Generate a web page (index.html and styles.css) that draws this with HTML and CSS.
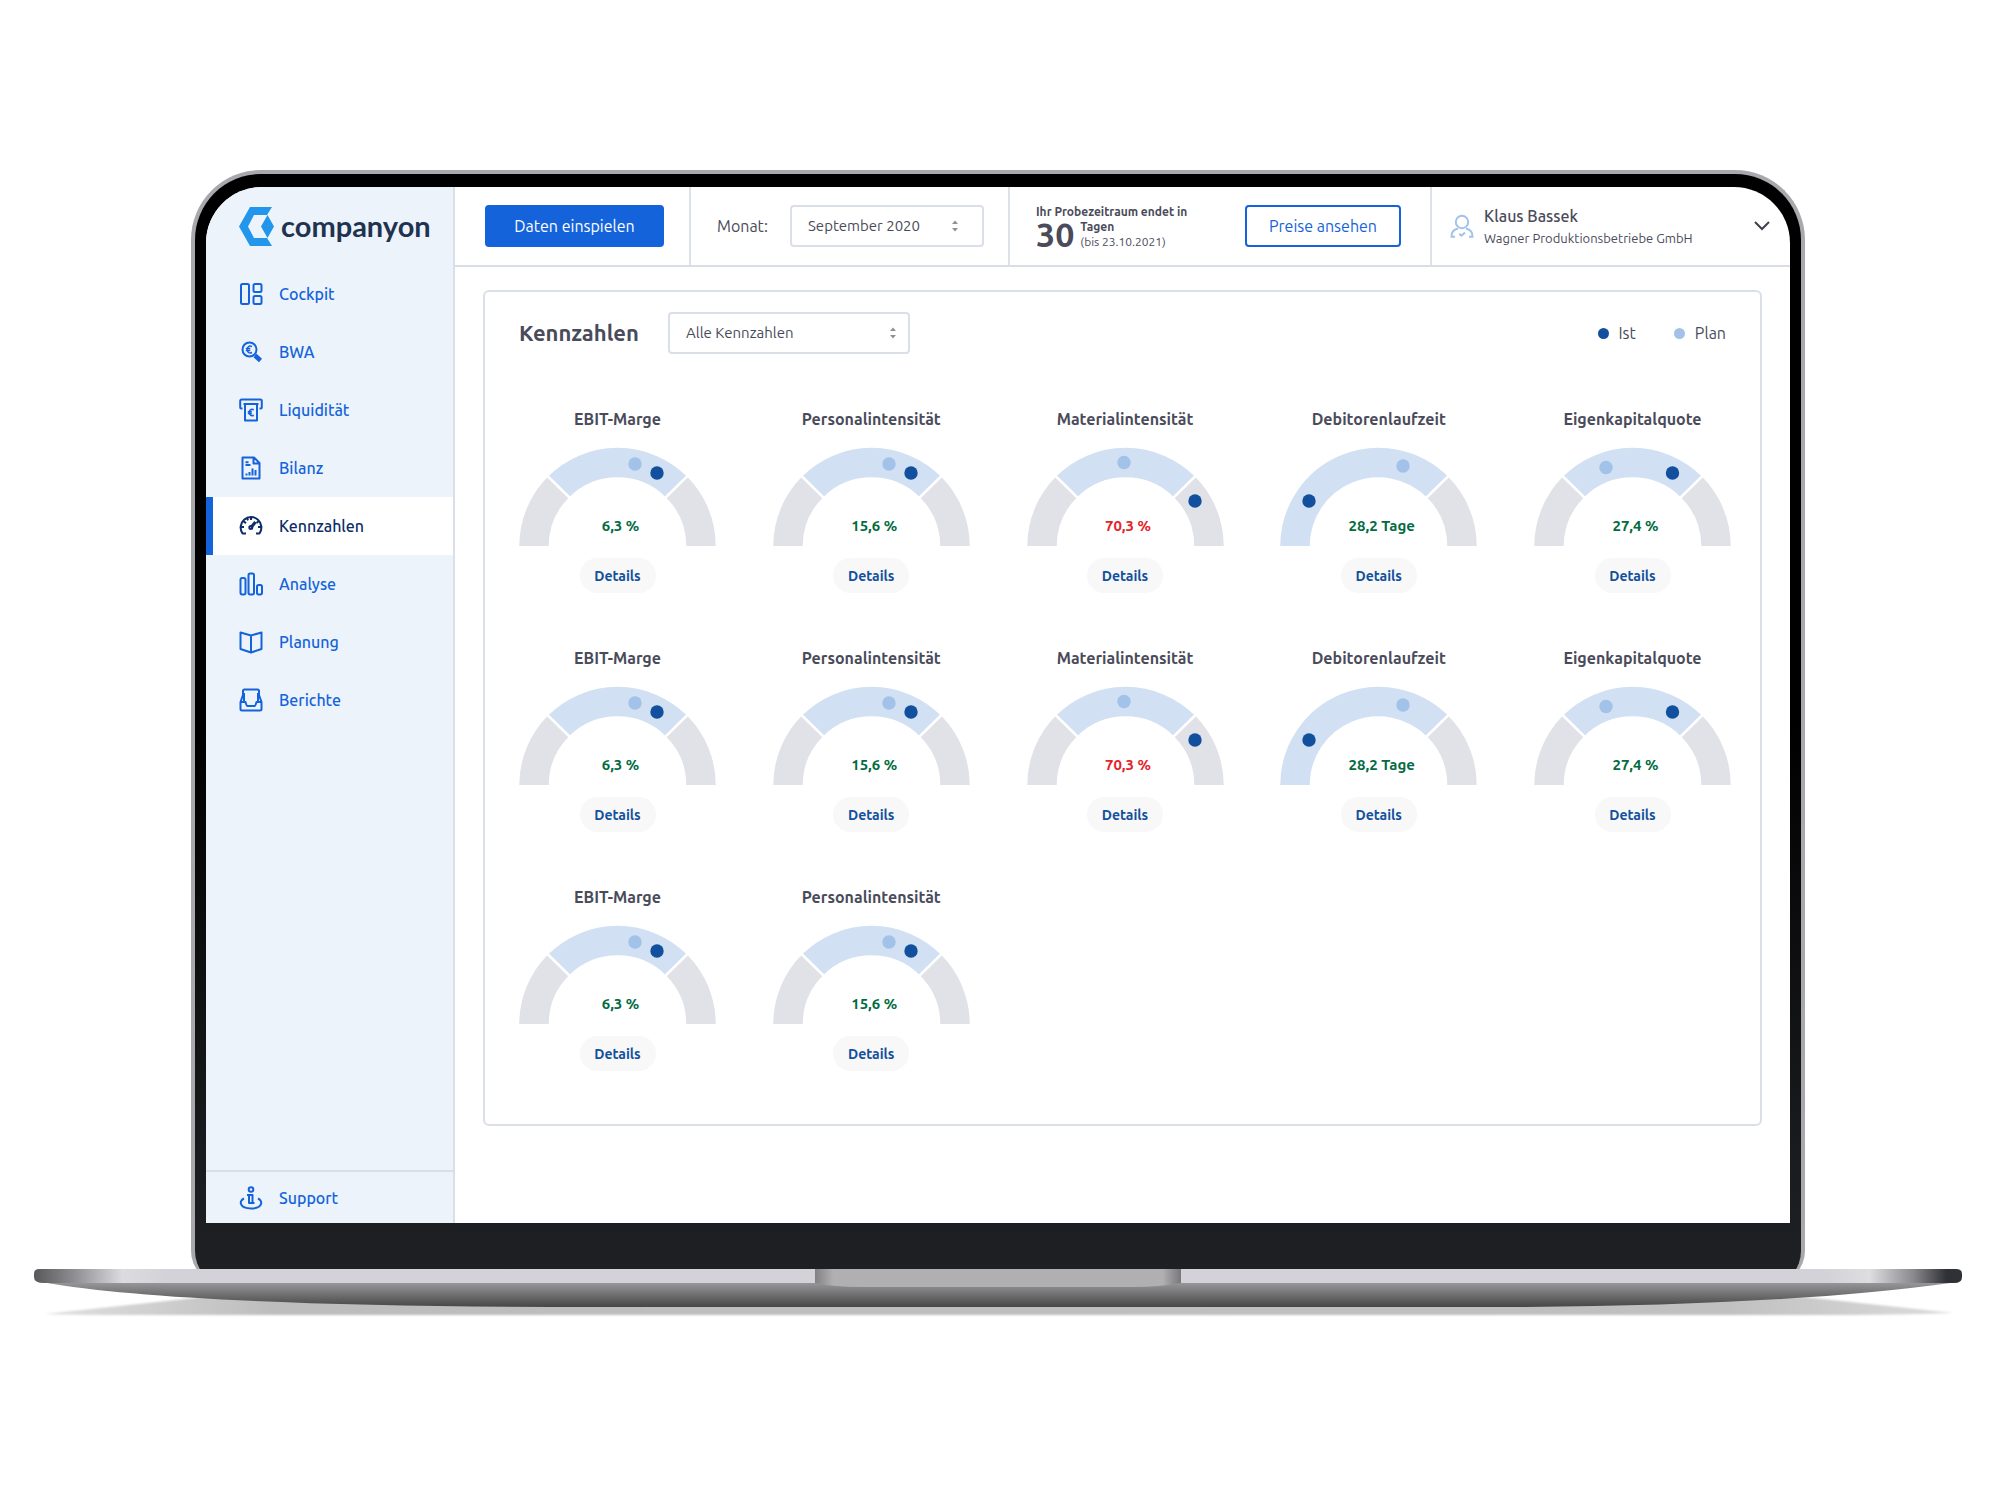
FILE: index.html
```html
<!DOCTYPE html>
<html lang="de">
<head>
<meta charset="utf-8">
<meta name="viewport" content="width=device-width, initial-scale=1">
<title>companyon – Kennzahlen</title>
<link rel="stylesheet" href="styles.css">
</head>
<body>
<svg class="symbols" aria-hidden="true">
  <symbol id="band" viewBox="0 0 197 99">
    <path class="seg-out" d="M15 99A83.5 83.5 0 0 1 39.5 40M157.500 40A83.500 83.500 0 0 1 182 99"/>
    <path class="seg-ok" d="M39.500 40A83.500 83.500 0 0 1 157.500 40"/>
    <path class="seg-gap" d="M27 27.500L52 52M170 27.500L145 52"/>
  </symbol>
  <symbol id="band-low" viewBox="0 0 197 99">
    <path class="seg-out" d="M157.500 40A83.500 83.500 0 0 1 182 99"/>
    <path class="seg-ok" d="M15 99A83.500 83.500 0 0 1 157.500 40"/>
    <path class="seg-gap" d="M170 27.500L145 52"/>
  </symbol>
  <symbol id="sort" viewBox="0 0 8 12"><path d="M4 0.500L7 4H1zM4 11.500L7 8H1z"/></symbol>
</svg>
<div class="laptop">
  <div class="lid">
    <div class="screen">
      <aside class="sidebar">
        <a class="logo" href="#">
          <svg width="36" height="39" viewBox="0 0 36 39" fill="#2196ea" aria-hidden="true"><path d="M0 19.500L11 0H33L28 8H15L9 19.500L15 31H28L33 39H11zM22 19.500L28.500 8L35 19.500L28.500 31z"/></svg>
          <span>companyon</span>
        </a>
        <nav class="nav">
          <a href="#"><svg class="icon" viewBox="0 0 24 24"><rect x="2" y="2" width="8" height="20" rx="1.500"/><rect x="14.500" y="2" width="8" height="8" rx="1.500"/><rect x="14.500" y="14" width="8" height="8" rx="1.500"/></svg>Cockpit</a>
          <a href="#"><svg class="icon" viewBox="0 0 24 24"><circle cx="10.500" cy="9.500" r="7"/><path d="M16 15.500L21.500 20.500" stroke-width="4.500"/><path d="M13 6.500C10 5 8.300 7 8.300 9.500S10 14 13 12.500M6.800 8.500h4.500M6.800 10.500h4.500" stroke-width="1.500"/></svg>BWA</a>
          <a href="#"><svg class="icon" viewBox="0 0 24 24"><path d="M3.500 10.500H2.200Q1.200 10.500 1.200 9.500V3Q1.200 1.500 2.700 1.500H21.300Q22.800 1.500 22.800 3V9.500Q22.800 10.500 21.800 10.500H20.500M4.500 6H19.500M6 6V22.500H18V6"/><path d="M14.800 11.800C11.800 10.500 10.300 12.500 10.300 14.500S12 18.500 14.800 17.200M8.800 13.700h4M8.800 15.500h4" stroke-width="1.500"/></svg>Liquidität</a>
          <a href="#"><svg class="icon" viewBox="0 0 24 24"><path d="M3.500 1.500H15L20.500 7V22.500H3.500zM14.500 2V7.500H20M6.500 6.200H9.500M6.500 9H11.500M7.500 19.500V17.500M10.500 19.500V16M13.500 19.500V12.500M16.500 19.500V14"/></svg>Bilanz</a>
          <a href="#" class="active" aria-current="page"><svg class="icon" viewBox="0 0 24 24"><path d="M7 19.500H3.500A10.400 10.400 0 1 1 20.500 19.500H17M12 3V6M4.700 7.300L7 9.200M8 3.800L9 6.300M2 13H5M22 13H19M19.500 7.300L17.500 9" /><path d="M16.500 8L12 13.500" stroke-width="3"/><circle cx="11.800" cy="13.500" r="1.500"/></svg>Kennzahlen</a>
          <a href="#"><svg class="icon" viewBox="0 0 24 24"><rect x="1.500" y="6" width="5" height="16.500" rx="1.700"/><rect x="9.500" y="1.500" width="5.500" height="21" rx="1.700"/><rect x="18" y="13" width="5" height="9.500" rx="1.700"/></svg>Analyse</a>
          <a href="#"><svg class="icon" viewBox="0 0 24 24"><path d="M12 5.500L1.500 2.500V19L12 22.500L22.500 19V2.500zM12 5.500V22.500"/></svg>Planung</a>
          <a href="#"><svg class="icon" viewBox="0 0 24 24"><path d="M1.500 14V21Q1.500 22.500 3 22.500H21Q22.500 22.500 22.500 21V14L20 7V3Q20 1.500 18.500 1.500H5.500Q4 1.500 4 3V7zM1.500 14H6.500Q7.500 18 8.500 18H15.500Q16.500 18 17.500 14H22.500M5 5V13M19 5V13"/></svg>Berichte</a>
        </nav>
        <a class="support" href="#"><svg class="icon" viewBox="0 0 24 24"><circle cx="12" cy="3.500" r="2.300"/><path d="M8 9H13.500V16M10 9.500V17H15.500M5 12.500C-0.500 15 0.500 22.500 12 22.500S24.500 15 19 12.500"/></svg>Support</a>
      </aside>
      <div class="main">
        <header class="topbar">
          <div class="cell cell-import"><button type="button" class="btn btn-primary">Daten einspielen</button></div>
          <div class="cell cell-month">
            <label for="month">Monat:</label>
            <span class="picker picker-month">
              <select id="month"><option>September 2020</option></select>
              <svg class="sort" aria-hidden="true"><use href="#sort"/></svg>
            </span>
          </div>
          <div class="cell cell-trial">
            <div class="trial">
              <strong class="trial-head">Ihr Probezeitraum endet in</strong>
              <strong class="trial-days">30</strong>
              <div class="trial-note"><strong>Tagen</strong><span>(bis 23.10.2021)</span></div>
            </div>
            <button type="button" class="btn btn-outline">Preise ansehen</button>
          </div>
          <div class="cell cell-user">
            <svg class="avatar" viewBox="0 0 24 24" aria-hidden="true"><circle cx="12" cy="8" r="6.200"/><path d="M5 22.700H1.500C1.300 18.500 4 15.500 8 14.500M19 22.700H22.500C22.700 18.500 20 15.500 16 14.500M9.300 19.700L11.500 21.700L15 18.500"/></svg>
            <div class="user"><strong>Klaus Bassek</strong><span>Wagner Produktionsbetriebe GmbH</span></div>
            <button type="button" class="menu" aria-label="Konto"><svg width="16" height="10" viewBox="0 0 16 10"><path d="M1 1L8 8L15 1"/></svg></button>
          </div>
        </header>
        <main class="card">
          <div class="card-head">
            <h1>Kennzahlen</h1>
            <span class="picker picker-kpi">
              <select aria-label="Kennzahlen"><option>Alle Kennzahlen</option></select>
              <svg class="sort" aria-hidden="true"><use href="#sort"/></svg>
            </span>
            <ul class="legend"><li class="is">Ist</li><li class="plan">Plan</li></ul>
          </div>
          <div class="gauges">
            <section class="gauge"><h2>EBIT-Marge</h2><div class="dial"><svg viewBox="0 0 197 99"><use href="#band"/><circle class="plan" cx="116" cy="17" r="6.700"/><circle class="is" cx="138" cy="26" r="6.700"/></svg><b>6,3 %</b></div><button type="button">Details</button></section>
            <section class="gauge"><h2>Personalintensität</h2><div class="dial"><svg viewBox="0 0 197 99"><use href="#band"/><circle class="plan" cx="116" cy="17" r="6.700"/><circle class="is" cx="138" cy="26" r="6.700"/></svg><b>15,6 %</b></div><button type="button">Details</button></section>
            <section class="gauge"><h2>Materialintensität</h2><div class="dial"><svg viewBox="0 0 197 99"><use href="#band"/><circle class="plan" cx="97" cy="15.500" r="6.700"/><circle class="is" cx="168" cy="54" r="6.700"/></svg><b class="bad">70,3 %</b></div><button type="button">Details</button></section>
            <section class="gauge"><h2>Debitorenlaufzeit</h2><div class="dial"><svg viewBox="0 0 197 99"><use href="#band-low"/><circle class="plan" cx="123" cy="19" r="6.700"/><circle class="is" cx="29" cy="54" r="6.700"/></svg><b>28,2 Tage</b></div><button type="button">Details</button></section>
            <section class="gauge"><h2>Eigenkapitalquote</h2><div class="dial"><svg viewBox="0 0 197 99"><use href="#band"/><circle class="plan" cx="72" cy="20.500" r="6.700"/><circle class="is" cx="138.500" cy="26" r="6.700"/></svg><b>27,4 %</b></div><button type="button">Details</button></section>
            <section class="gauge"><h2>EBIT-Marge</h2><div class="dial"><svg viewBox="0 0 197 99"><use href="#band"/><circle class="plan" cx="116" cy="17" r="6.700"/><circle class="is" cx="138" cy="26" r="6.700"/></svg><b>6,3 %</b></div><button type="button">Details</button></section>
            <section class="gauge"><h2>Personalintensität</h2><div class="dial"><svg viewBox="0 0 197 99"><use href="#band"/><circle class="plan" cx="116" cy="17" r="6.700"/><circle class="is" cx="138" cy="26" r="6.700"/></svg><b>15,6 %</b></div><button type="button">Details</button></section>
            <section class="gauge"><h2>Materialintensität</h2><div class="dial"><svg viewBox="0 0 197 99"><use href="#band"/><circle class="plan" cx="97" cy="15.500" r="6.700"/><circle class="is" cx="168" cy="54" r="6.700"/></svg><b class="bad">70,3 %</b></div><button type="button">Details</button></section>
            <section class="gauge"><h2>Debitorenlaufzeit</h2><div class="dial"><svg viewBox="0 0 197 99"><use href="#band-low"/><circle class="plan" cx="123" cy="19" r="6.700"/><circle class="is" cx="29" cy="54" r="6.700"/></svg><b>28,2 Tage</b></div><button type="button">Details</button></section>
            <section class="gauge"><h2>Eigenkapitalquote</h2><div class="dial"><svg viewBox="0 0 197 99"><use href="#band"/><circle class="plan" cx="72" cy="20.500" r="6.700"/><circle class="is" cx="138.500" cy="26" r="6.700"/></svg><b>27,4 %</b></div><button type="button">Details</button></section>
            <section class="gauge"><h2>EBIT-Marge</h2><div class="dial"><svg viewBox="0 0 197 99"><use href="#band"/><circle class="plan" cx="116" cy="17" r="6.700"/><circle class="is" cx="138" cy="26" r="6.700"/></svg><b>6,3 %</b></div><button type="button">Details</button></section>
            <section class="gauge"><h2>Personalintensität</h2><div class="dial"><svg viewBox="0 0 197 99"><use href="#band"/><circle class="plan" cx="116" cy="17" r="6.700"/><circle class="is" cx="138" cy="26" r="6.700"/></svg><b>15,6 %</b></div><button type="button">Details</button></section>
          </div>
        </main>
      </div>
    </div>
  </div>
  <svg class="base" viewBox="0 0 1928 52" preserveAspectRatio="none" aria-hidden="true">
    <defs>
      <linearGradient id="slab"><stop offset="0" stop-color="#58585a"/><stop offset=".02" stop-color="#8c8c90"/><stop offset=".046" stop-color="#dcdce0"/><stop offset=".068" stop-color="#d3d2d8"/><stop offset=".93" stop-color="#d3d2d8"/><stop offset=".952" stop-color="#dedee0"/><stop offset=".975" stop-color="#88888d"/><stop offset=".992" stop-color="#303136"/><stop offset="1" stop-color="#303136"/></linearGradient>
      <linearGradient id="under" x2="0" y2="1"><stop offset="0" stop-color="#98989b"/><stop offset="1" stop-color="#464646"/></linearGradient>
      <linearGradient id="notch"><stop offset="0" stop-color="#828285"/><stop offset=".05" stop-color="#b0b0b2"/><stop offset=".95" stop-color="#b0b0b2"/><stop offset="1" stop-color="#77777a"/></linearGradient>
      <linearGradient id="shade"><stop offset="0" stop-color="#e0e0e0"/><stop offset=".12" stop-color="#bdbdbd"/><stop offset=".88" stop-color="#c0c0c0"/><stop offset="1" stop-color="#dcdcdc"/></linearGradient>
      <filter id="soft" x="-1%" y="-20%" width="102%" height="140%"><feGaussianBlur stdDeviation="1"/></filter>
    </defs>
    <path filter="url(#soft)" fill="url(#shade)" d="M10 45L170 28H1770L1920 44Q1860 46 1780 46H100Q40 46 10 45z"/>
    <path fill="url(#under)" d="M10 13.500Q150 38 560 38H1490Q1760 36 1920 13.500z"/>
    <path fill="url(#slab)" d="M5 0H1922Q1928 0 1928 5V8Q1928 14 1920 14H10Q0 14 0 8V5Q0 0 5 0z"/>
    <path fill="url(#notch)" d="M781 0H1147V14Q1125 18 1100 18H828Q800 18 781 14z"/>
  </svg>
</div>
</body>
</html>
```
FILE: styles.css
```css
* { box-sizing: border-box; }

body {
  margin: 0;
  padding: 170px 38px 170px 34px;
  background: #fff;
  color: #4a4b5a;
  font: 16px/24px Ubuntu, "Noto Sans", sans-serif;
}

h1, h2, ul { margin: 0; padding: 0; }
a { color: inherit; text-decoration: none; }
button, select { font: inherit; color: inherit; cursor: pointer; }
.symbols { position: absolute; width: 0; height: 0; }

/* device frame */
.lid {
  margin: 0 157px;
  padding: 13px 11px 60px;
  border: 4px solid #a9a9ad;
  border-bottom-width: 0;
  border-radius: 70px 70px 32px 32px;
  background: linear-gradient(#000 50%, #1b1c1f 90%, #1f2024);
}
.screen {
  display: flex;
  min-height: 1036px;
  border-radius: 56px 56px 0 0;
  overflow: hidden;
  background: #fff;
}
.base { display: block; position: relative; width: 100%; height: 52px; margin-top: -14px; }

/* sidebar */
.sidebar {
  display: flex;
  flex-direction: column;
  flex: 0 0 249px;
  border-right: 2px solid #d8dfea;
  background: #ecf3fb;
  color: #1463da;
  font-weight: 500;
}
.logo {
  display: flex;
  align-items: center;
  gap: 6px;
  height: 78px;
  padding-left: 33px;
  color: #1f3350;
  font: 700 29px/36px Lato, sans-serif;
}
.nav a, .support {
  display: flex;
  align-items: center;
  gap: 16px;
  height: 58px;
  padding-left: 26px;
  border-left: 7px solid transparent;
}
.nav a.active { border-left-color: #1463da; background: #fff; color: #0c2d66; }
.support { height: 53px; margin-top: auto; border-top: 2px solid #d8dfea; border-left-width: 0; padding-left: 33px; }
.icon { width: 24px; height: 24px; fill: none; stroke: currentColor; stroke-width: 2; stroke-linejoin: round; }

/* top bar */
.main { flex: 1; min-width: 0; }
.topbar { display: flex; height: 80px; border-bottom: 2px solid #d8dde8; }
.cell { display: flex; align-items: center; border-right: 2px solid #dde1ea; }
.cell-import { flex: 0 0 236px; padding-left: 30px; }
.cell-month { flex: 0 0 319px; padding-left: 26px; padding-right: 24px; justify-content: space-between; }
.cell-trial { flex: 0 0 422px; padding-left: 26px; padding-right: 29px; justify-content: space-between; }
.cell-user { flex: 1; padding: 0 20px 0 18px; border-right: 0; }

.btn { height: 42px; border-radius: 4px; padding: 0; }
.btn-primary { width: 179px; border: 0; background: #1463da; color: #fff; }
.btn-outline { width: 156px; border: 2px solid #1463da; background: #fff; color: #1463da; }

.picker { position: relative; display: block; }
.picker select {
  width: 100%;
  height: 42px;
  padding: 0 16px;
  border: 2px solid #dadfe9;
  border-radius: 4px;
  background: #fff;
  font-size: 15px;
  appearance: none;
}
.picker-month { width: 194px; }
.picker-kpi { width: 242px; }
.sort { position: absolute; top: 15px; right: 13px; width: 8px; height: 12px; fill: #8f909b; pointer-events: none; }
.picker-month .sort { right: 25px; }

.trial { display: grid; grid-template-columns: auto 1fr; column-gap: 6px; font-size: 12px; line-height: 15px; }
.trial-head { grid-column: 1 / -1; }
.trial-days { font-size: 34px; line-height: 30px; }
.trial-note { display: flex; flex-direction: column; }

.avatar { width: 24px; height: 24px; fill: none; stroke: #a3c2e9; stroke-width: 2; }
.user { display: flex; flex-direction: column; margin-left: 10px; font-size: 13px; line-height: 20px; }
.user strong { font-size: 16px; font-weight: 500; line-height: 24px; }
.menu { display: flex; margin-left: auto; padding: 0; border: 0; background: none; }
.menu svg { fill: none; stroke: #3f404e; stroke-width: 2; }

/* key figures */
.card {
  margin: 23px 28px 0;
  padding: 20px 29px 53px 34px;
  border: 2px solid #dadfe8;
  border-radius: 6px;
}
.card-head { display: flex; align-items: center; }
h1 { width: 149px; font-size: 22px; line-height: 28px; }
.legend { display: flex; gap: 38px; margin-left: auto; padding-right: 5px; list-style: none; }
.legend li { display: flex; align-items: center; gap: 10px; }
.legend li::before { content: ""; width: 11px; height: 11px; border-radius: 50%; background: #12509d; }
.legend .plan::before { background: #a3c2e9; }

.gauges {
  display: grid;
  grid-template-columns: repeat(5, 197px);
  justify-content: space-between;
  row-gap: 53px;
  margin-top: 53px;
}
.gauge { display: flex; flex-direction: column; align-items: center; }
h2 { font-size: 16px; line-height: 24px; white-space: nowrap; }
.dial { display: grid; margin: 16px 0 12px; }
.dial svg, .dial b { grid-area: 1 / 1; }
.dial svg { width: 197px; height: 99px; }
.dial b { place-self: end center; padding: 0 0 8px 6px; color: #026b42; font-size: 15px; }
.dial .bad { color: #e3242b; }
.seg-out, .seg-ok, .seg-gap { fill: none; stroke-width: 29.5px; }
.seg-out { stroke: #e1e2e8; }
.seg-ok { stroke: #d1e0f3; }
.seg-gap { stroke: #fff; stroke-width: 2.5px; }
.dial .plan { fill: #a3c2e9; }
.dial .is { fill: #12509d; }
.gauge button {
  width: 76px;
  height: 35px;
  padding: 0;
  border: 0;
  border-radius: 18px;
  background: #f8f8f8;
  color: #12509d;
  font-size: 14px;
  font-weight: 700;
}
```
